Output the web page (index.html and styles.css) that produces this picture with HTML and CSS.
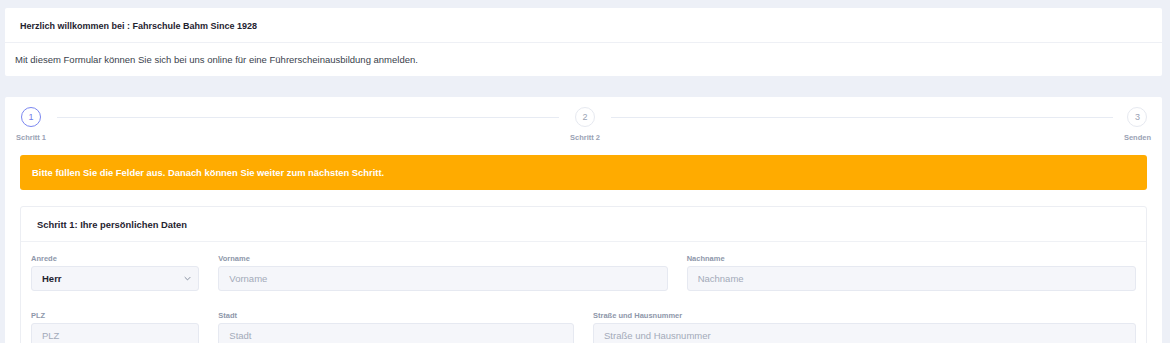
FILE: index.html
```html
<!DOCTYPE html>
<html lang="de">
<head>
    <meta charset="UTF-8">
    <meta name="viewport" content="width=device-width, initial-scale=1.0">
    <title>Fahrschule Bahm - Anmeldung</title>
    <link rel="stylesheet" href="styles.css">
</head>
<body>
    <div class="card intro">
        <div class="intro-header">Herzlich willkommen bei : Fahrschule Bahm Since 1928</div>
        <div class="intro-body">Mit diesem Formular können Sie sich bei uns online für eine Führerscheinausbildung anmelden.</div>
    </div>

    <div class="card wizard">
        <div class="stepper">
            <div class="step active">
                <span class="step-circle">1</span>
                <span class="step-label">Schritt 1</span>
            </div>
            <div class="step-line"></div>
            <div class="step">
                <span class="step-circle">2</span>
                <span class="step-label">Schritt 2</span>
            </div>
            <div class="step-line"></div>
            <div class="step">
                <span class="step-circle">3</span>
                <span class="step-label">Senden</span>
            </div>
        </div>

        <div class="alert">Bitte füllen Sie die Felder aus. Danach können Sie weiter zum nächsten Schritt.</div>

        <div class="panel">
            <div class="panel-title">Schritt 1: Ihre persönlichen Daten</div>
            <form class="panel-body">
                <div class="field col-2">
                    <label for="anrede">Anrede</label>
                    <div class="select">
                        <span>Herr</span>
                        <svg viewBox="0 0 10 6"><path d="M1 1l4 4 4-4"/></svg>
                    </div>
                </div>
                <div class="field col-5">
                    <label for="vorname">Vorname</label>
                    <input type="text" id="vorname" placeholder="Vorname">
                </div>
                <div class="field col-5">
                    <label for="nachname">Nachname</label>
                    <input type="text" id="nachname" placeholder="Nachname">
                </div>

                <div class="field col-2">
                    <label for="plz">PLZ</label>
                    <input type="text" id="plz" placeholder="PLZ">
                </div>
                <div class="field col-4">
                    <label for="stadt">Stadt</label>
                    <input type="text" id="stadt" placeholder="Stadt">
                </div>
                <div class="field col-6">
                    <label for="strasse">Straße und Hausnummer</label>
                    <input type="text" id="strasse" placeholder="Straße und Hausnummer">
                </div>
            </form>
        </div>
    </div>
</body>
</html>
```

FILE: styles.css
```css
* {
    margin: 0;
    padding: 0;
    box-sizing: border-box;
}

body {
    font-family: "Liberation Sans", Arial, sans-serif;
    background: #edf0f7;
    padding: 8px 8px 0 5px;
    color: #2d3140;
}

.card {
    background: white;
    border-radius: 2px;
}

.intro {
    margin-bottom: 21px;
}

.intro-header {
    height: 35px;
    display: flex;
    align-items: center;
    padding: 2px 0 0 15px;
    font-size: 9px;
    font-weight: bold;
    color: #1f2330;
    border-bottom: 1px solid #eef0f5;
}

.intro-body {
    height: 33px;
    display: flex;
    align-items: center;
    padding-left: 10px;
    font-size: 9.5px;
    color: #3a3f4c;
}

.wizard {
    padding: 10px 15px 20px;
}

.stepper {
    display: flex;
    align-items: flex-start;
    margin: 0 -4px 13px;
}

.step {
    display: flex;
    flex-direction: column;
    align-items: center;
}

.step-circle {
    width: 20px;
    height: 20px;
    border-radius: 50%;
    border: 1px solid #e6e9f0;
    display: flex;
    align-items: center;
    justify-content: center;
    font-size: 9px;
    color: #9aa2b4;
}

.step.active .step-circle {
    border: 1.5px solid #7a86f0;
    color: #6f7cea;
}

.step-label {
    margin-top: 6px;
    font-size: 7.5px;
    font-weight: bold;
    color: #9aa2b4;
}

.step-line {
    flex: 1;
    height: 1px;
    background: #e7ebf3;
    margin: 10px 11px 0;
}

.alert {
    background: #ffab00;
    color: white;
    font-size: 9.4px;
    font-weight: bold;
    height: 35px;
    display: flex;
    align-items: center;
    padding-left: 12px;
    border-radius: 3px;
    margin-bottom: 16px;
}

.panel {
    border: 1px solid #eceef3;
    border-radius: 3px;
}

.panel-title {
    height: 35px;
    display: flex;
    align-items: center;
    padding: 1px 0 0 16px;
    font-size: 9.4px;
    font-weight: bold;
    color: #1f2330;
    border-bottom: 1px solid #eff1f5;
}

.panel-body {
    display: grid;
    grid-template-columns: repeat(12, 1fr);
    column-gap: 19px;
    row-gap: 20px;
    padding: 12px 10px 20px;
}

.col-2 { grid-column: span 2; }
.col-4 { grid-column: span 4; }
.col-5 { grid-column: span 5; }
.col-6 { grid-column: span 6; }

label {
    display: block;
    font-size: 7.5px;
    font-weight: bold;
    color: #8e97aa;
    margin-bottom: 3px;
}

input,
.select {
    width: 100%;
    height: 25px;
    background: #f5f6fa;
    border: 1px solid #e6e9f1;
    border-radius: 3px;
    padding: 0 10px;
    font-family: inherit;
    font-size: 9.5px;
    color: #2d3140;
}

input::placeholder {
    color: #a3aab9;
}

.select {
    display: flex;
    align-items: center;
    justify-content: space-between;
    padding-right: 7px;
    font-weight: bold;
    color: #1f2330;
}

.select svg {
    width: 7px;
    height: 5px;
    fill: none;
    stroke: #7c8496;
    stroke-width: 1.3;
}
```
